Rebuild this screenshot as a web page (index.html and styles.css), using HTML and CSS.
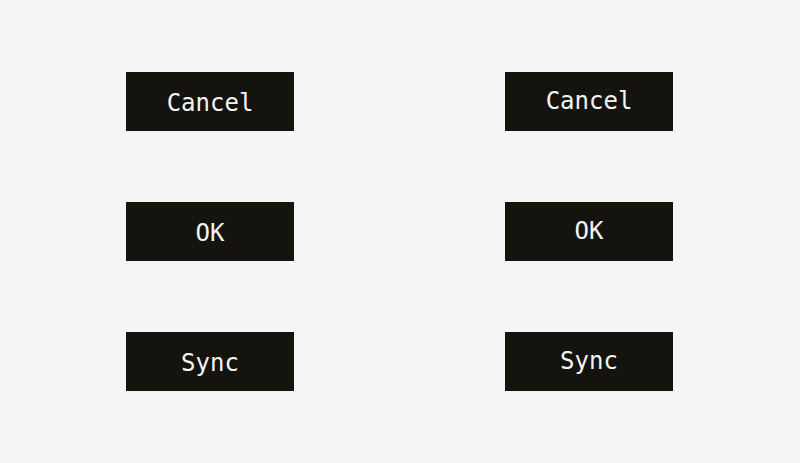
FILE: index.html
```html
<!DOCTYPE html>
<html>
<head>
<meta charset="utf-8">
<link rel="stylesheet" href="styles.css">
</head>
<body>
<div class="grid">
  <button class="btn">Cancel</button>
  <button class="btn btn-alt">Cancel</button>
  <button class="btn">OK</button>
  <button class="btn btn-alt">OK</button>
  <button class="btn">Sync</button>
  <button class="btn btn-alt">Sync</button>
</div>
</body>
</html>
```
FILE: styles.css
```css
html, body {
  margin: 0;
  padding: 0;
  background: #f5f5f5;
}
.grid {
  display: grid;
  grid-template-columns: 168px 168px;
  grid-auto-rows: 59px;
  column-gap: 211px;
  row-gap: 71px;
  padding: 72px 0 0 126px;
}
.btn {
  margin: 0;
  border: none;
  background: #15130e;
  color: #f4f4f4;
  font-family: "DejaVu Sans Mono", monospace;
  font-size: 24px;
  padding: 0;
  padding-top: 2px;
  display: flex;
  align-items: center;
  justify-content: center;
}
.btn-alt {
  padding-top: 0;
  padding-bottom: 2px;
}
```
